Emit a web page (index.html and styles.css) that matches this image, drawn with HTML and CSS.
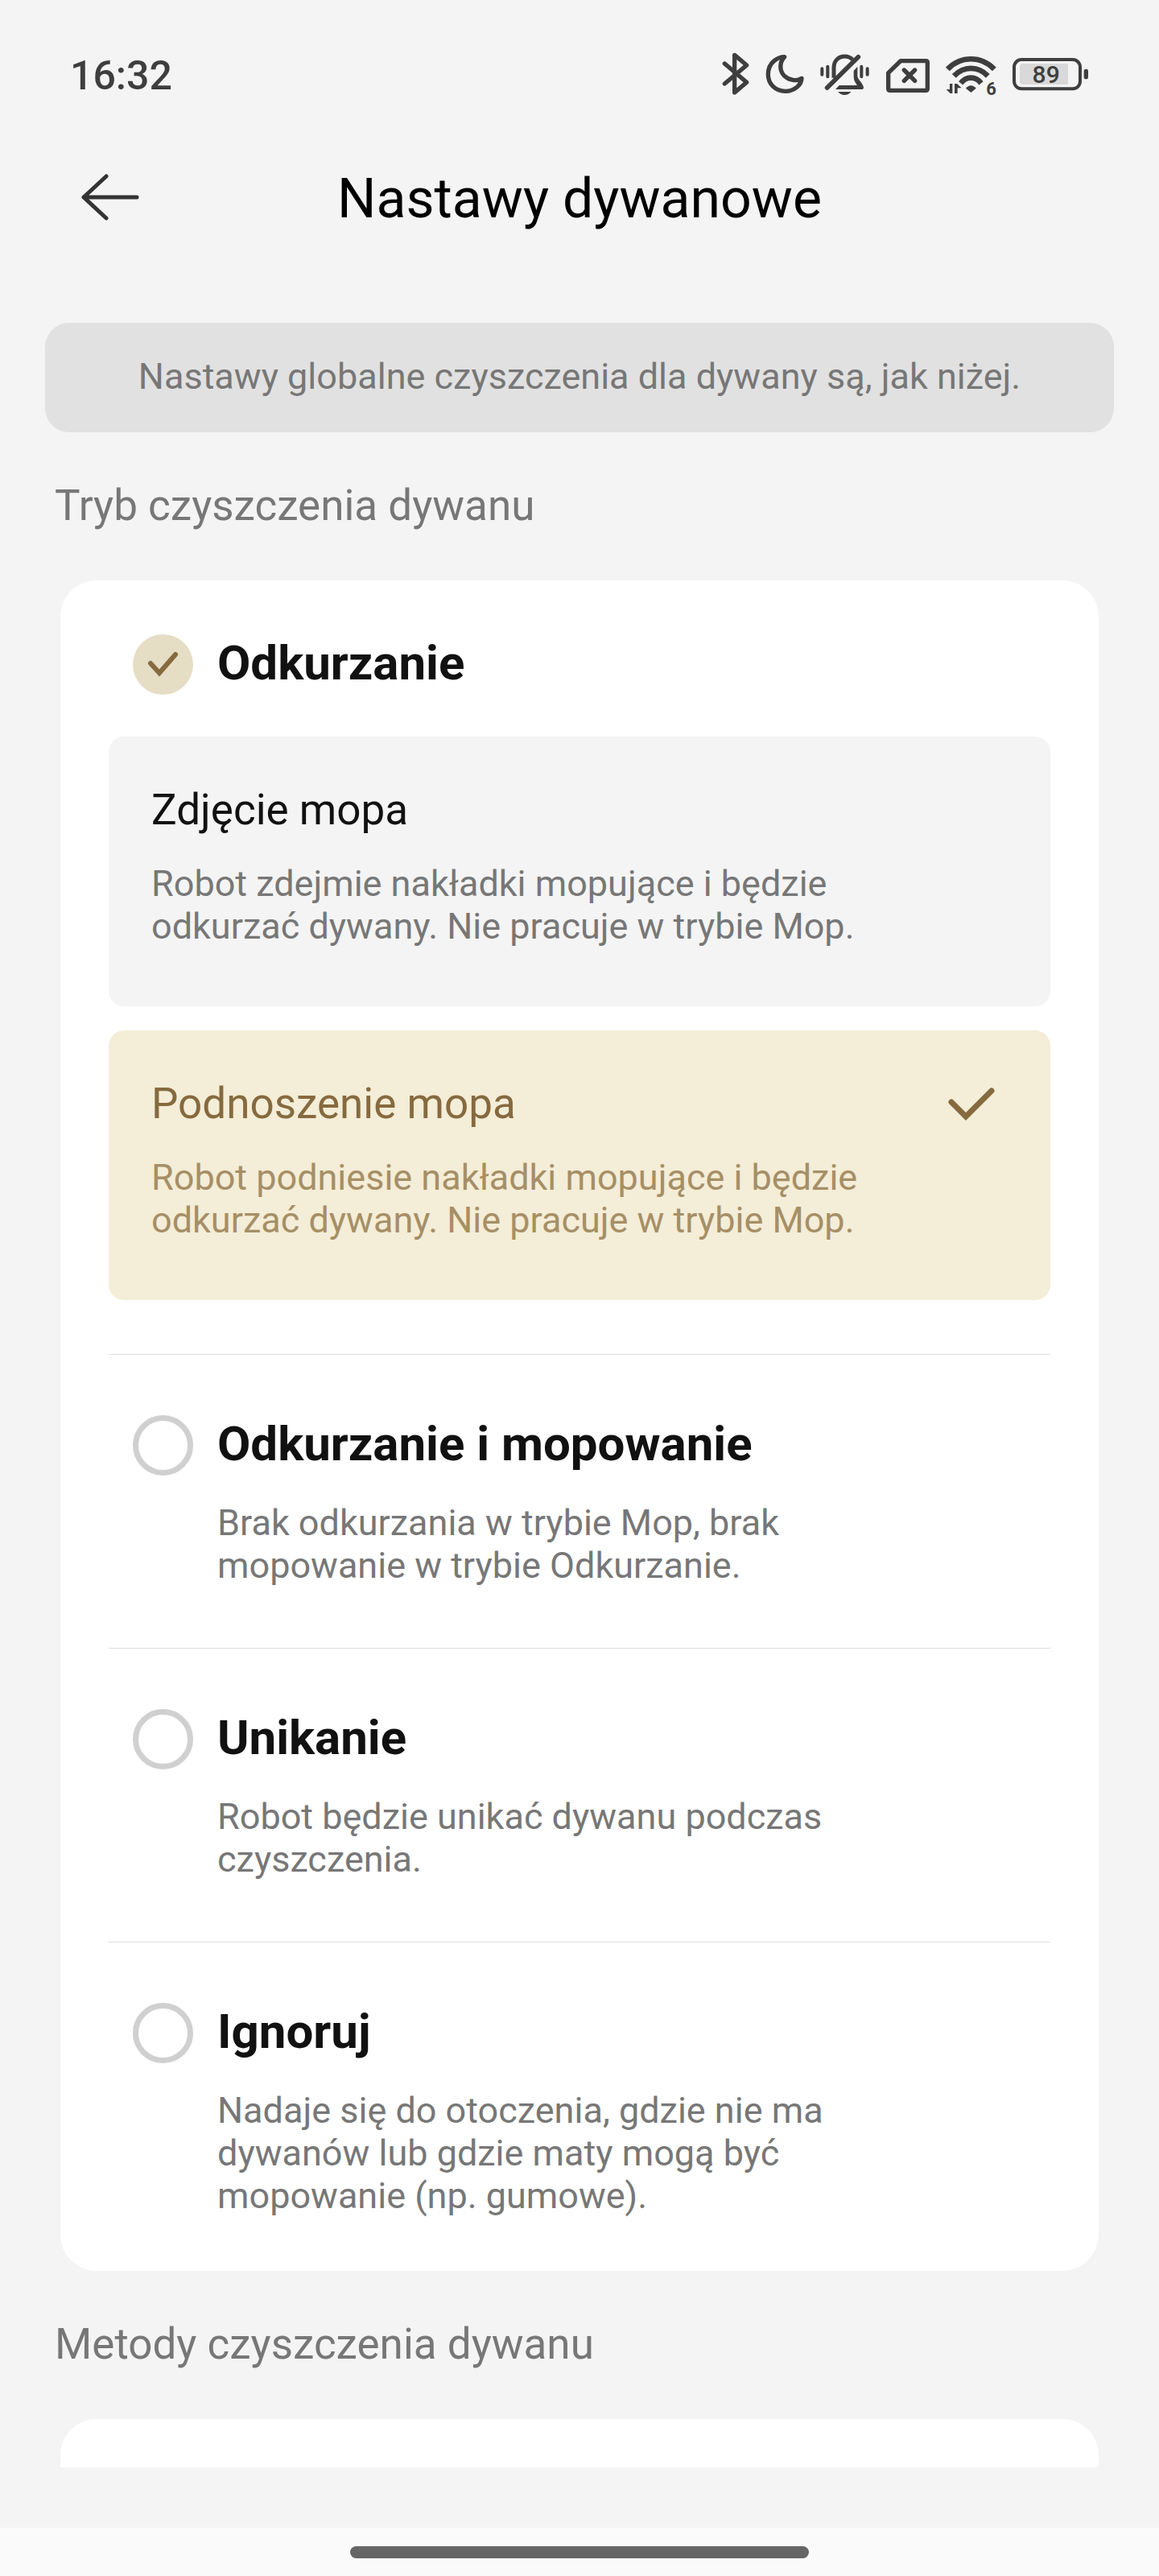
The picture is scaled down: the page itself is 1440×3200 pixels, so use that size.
FILE: index.html
```
<!DOCTYPE html>
<html lang="pl">
<head>
<meta charset="UTF-8">
<meta name="viewport" content="width=device-width, initial-scale=1.0">
<title>Nastawy dywanowe</title>
<link rel="stylesheet" href="styles.css">
</head>
<body>

<div class="status-bar">
    <span class="time">16:32</span>
    <div class="status-icons">
        <!-- bluetooth -->
        <svg width="34" height="65" viewBox="21 0 102 195">
            <path d="M31 57 L113 127 L68 165 V25 L113 63 L31 132" fill="none" stroke="#3e3e3e" stroke-width="16" stroke-linecap="round" stroke-linejoin="round"/>
        </svg>
        <!-- do not disturb -->
        <svg width="48" height="65" viewBox="183 0 144 195">
            <path d="M254 32 C232 32 193 50 193 97 C193 134 221 160 257 160 C290 160 317 137 318 112 C300 124 272 120 254 103 C236 86 233 55 254 32 Z" fill="none" stroke="#3e3e3e" stroke-width="16" stroke-linejoin="round"/>
        </svg>
        <!-- muted bell -->
        <svg width="61" height="65" viewBox="387 0 183 195">
            <g fill="none" stroke="#3e3e3e" stroke-linecap="round">
                <path d="M394 76 V98 M563 76 V98" stroke-width="12"/>
                <path d="M415 68 V106 M541 68 V106" stroke-width="12"/>
                <path d="M413 147 L529 32" stroke-width="17"/>
                <path d="M438 110 V72 C438 44 458 30 478 30 C490 30 501 35 508 42" stroke-width="15" stroke-linecap="butt"/>
            </g>
            <path d="M512 84 L526 68 V104 C528 116 549 134 549 146 C549 150 546 153 541 153 H444 L458 138 H525 C516 124 512 118 512 104 Z" fill="#3e3e3e"/>
            <path d="M454 162 H502 C496 170 488 174 478 174 C468 174 460 170 454 162 Z" fill="#3e3e3e"/>
        </svg>
        <!-- no sim card -->
        <svg width="56" height="65" viewBox="630 0 168 195">
            <path d="M687 47 H781 Q787 47 787 53 V151 Q787 157 781 157 H647 Q641 157 641 151 V92 Z" fill="none" stroke="#3e3e3e" stroke-width="16" stroke-linejoin="round"/>
            <path d="M700 81 L740 121 M740 81 L700 121" stroke="#3e3e3e" stroke-width="16" stroke-linecap="round"/>
        </svg>
        <!-- wifi 6 -->
        <svg width="62" height="65" viewBox="258 0 186 195">
            <g fill="none" stroke="#3e3e3e" stroke-width="20">
                <path d="M262 78 C310 27 388 27 436 78"/>
                <path d="M286 103 C322 65 376 65 412 103"/>
                <path d="M311 130 C332 103 366 103 387 130"/>
            </g>
            <path d="M330 149 C340 135 358 135 368 149 L352 163 Q349 165 346 163 Z" fill="#3e3e3e"/>
            <path d="M280 132 V168 H272 L257 153 H270 V132 Z M288 168 V132 H297 L314 148 H299 V168 Z" fill="#3e3e3e"/>
            <text class="wifi-gen" x="406" y="173">6</text>
        </svg>
        <!-- battery -->
        <svg width="95" height="65" viewBox="504 0 285 195">
            <rect x="510" y="42" width="246" height="109" rx="28" fill="none" stroke="#3e3e3e" stroke-width="12"/>
            <path d="M542 57 H711 V135 H542 Q531 135 531 124 V68 Q531 57 542 57 Z" fill="#d9d9d9"/>
            <rect x="770" y="77" width="16" height="38" rx="8" fill="#3e3e3e"/>
            <text class="battery-level" x="629" y="130">89</text>
        </svg>
    </div>
</div>

<header class="header">
    <button class="back" type="button" aria-label="Wstecz">
        <svg width="74" height="60" viewBox="0 0 74 60">
            <path d="M32 4 L4 30 L32 56 M4 30 H70" fill="none" stroke="#333" stroke-width="5" stroke-linecap="round" stroke-linejoin="round"/>
        </svg>
    </button>
    <h1>Nastawy dywanowe</h1>
</header>

<main class="content">
    <p class="notice">Nastawy globalne czyszczenia dla dywany są, jak niżej.</p>

    <h2>Tryb czyszczenia dywanu</h2>

    <section class="card">
        <div class="option">
            <span class="radio">
                <input type="radio" name="mode" id="vacuum" checked>
                <svg viewBox="0 0 75 75"><path d="M22 36 L33 48 L53 25" fill="none" stroke="#866a3f" stroke-width="6" stroke-linecap="round"/></svg>
            </span>
            <label class="option-title" for="vacuum">Odkurzanie</label>
        </div>

        <div class="choices">
            <label class="choice">
                <input type="radio" name="mop">
                <span class="choice-title">Zdjęcie mopa</span>
                <span class="choice-text">Robot zdejmie nakładki mopujące i będzie odkurzać dywany. Nie pracuje w trybie Mop.</span>
            </label>
            <label class="choice">
                <input type="radio" name="mop" checked>
                <span class="choice-title">Podnoszenie mopa
                    <svg class="tick" width="60" height="45" viewBox="0 0 60 45"><path d="M5 20 L23 38 L55 6" fill="none" stroke="#866a3f" stroke-width="7" stroke-linecap="round"/></svg>
                </span>
                <span class="choice-text">Robot podniesie nakładki mopujące i będzie odkurzać dywany. Nie pracuje w trybie Mop.</span>
            </label>
        </div>

        <div class="option divided">
            <span class="radio"><input type="radio" name="mode" id="both"></span>
            <label class="option-title" for="both">Odkurzanie i mopowanie</label>
            <p class="option-text">Brak odkurzania w trybie Mop, brak mopowanie w trybie Odkurzanie.</p>
        </div>

        <div class="option divided">
            <span class="radio"><input type="radio" name="mode" id="avoid"></span>
            <label class="option-title" for="avoid">Unikanie</label>
            <p class="option-text">Robot będzie unikać dywanu podczas czyszczenia.</p>
        </div>

        <div class="option divided">
            <span class="radio"><input type="radio" name="mode" id="ignore"></span>
            <label class="option-title" for="ignore">Ignoruj</label>
            <p class="option-text">Nadaje się do otoczenia, gdzie nie ma dywanów lub gdzie maty mogą być mopowanie (np. gumowe).</p>
        </div>
    </section>

    <h2>Metody czyszczenia dywanu</h2>

    <section class="card card-cut"></section>
</main>

<footer class="nav-bar">
    <div class="handle"></div>
</footer>

</body>
</html>
```
FILE: styles.css
```
* {
    box-sizing: border-box;
}
body {
    margin: 0;
    min-height: 100vh;
    display: flex;
    flex-direction: column;
    background-color: #f4f4f4;
    font-family: Roboto, sans-serif;
    color: #111111;
}
h1, h2, p {
    margin: 0;
    font-weight: 400;
}

/* system bar */
.status-bar {
    display: flex;
    justify-content: space-between;
    align-items: flex-end;
    padding: 60px 87px 0;
}
.time {
    font-size: 50px;
    line-height: 62px;
    font-weight: 500;
    color: #3e3e3e;
}
.status-icons {
    display: flex;
    gap: 20px;
}
.status-icons svg {
    overflow: visible;
}
.wifi-gen {
    font-size: 66px;
    font-weight: 700;
    fill: #3e3e3e;
}
.battery-level {
    font-size: 90px;
    font-weight: 500;
    text-anchor: middle;
    fill: #3e3e3e;
}

/* title */
.header {
    display: grid;
    grid-template-columns: 80px 1fr 80px;
    align-items: end;
    margin-top: 80px;
    padding: 0 100px;
}
.back {
    display: flex;
    padding: 0 0 12px;
    border: none;
    background: none;
    cursor: pointer;
}
.header h1 {
    padding-top: 2px;
    font-size: 68px;
    line-height: 80px;
    text-align: center;
    color: #000000;
}

.content {
    flex: 1;
    padding: 114px 56px 75px;
}
.notice {
    padding: 40px 30px 43px;
    border-radius: 30px;
    background-color: #e1e1e1;
    font-size: 45px;
    line-height: 53px;
    text-align: center;
    color: #777777;
}
h2 {
    margin: 60px 12px 62px;
    font-size: 53px;
    line-height: 62px;
    color: #777777;
}

/* cards */
.card {
    margin: 0 19px;
    padding: 67px 60px;
    border-radius: 45px;
    background-color: #ffffff;
}
.card-cut {
    height: 60px;
    padding: 0;
    border-radius: 45px 45px 0 0;
}
.option {
    display: grid;
    grid-template-columns: 75px 1fr;
    column-gap: 30px;
    align-items: start;
    padding: 0 180px 0 30px;
}
.divided {
    padding-top: 75px;
    padding-bottom: 76px;
    border-top: 1px solid #dedede;
}
.divided:last-child {
    padding-bottom: 0;
}
.option-title {
    font-size: 60px;
    line-height: 72px;
    font-weight: 700;
}
.option-text {
    grid-column: 2;
    margin-top: 32px;
    font-size: 45px;
    line-height: 53px;
    color: #777777;
}
.radio {
    display: grid;
    width: 75px;
    height: 75px;
}
.radio input, .radio svg {
    grid-area: 1 / 1;
}
.radio input {
    appearance: none;
    width: 75px;
    height: 75px;
    margin: 0;
    border: 7px solid #d0d0d0;
    border-radius: 50%;
}
.radio input:checked {
    border: none;
    background-color: #e5ddc4;
}
.radio svg {
    pointer-events: none;
}
.radio input:not(:checked) + svg {
    display: none;
}

/* mop choices */
.choices {
    display: flex;
    flex-direction: column;
    gap: 30px;
    margin: 52px 0 67px;
}
.choice {
    display: block;
    padding: 60px 68px 73px 53px;
    border-radius: 19px;
    background-color: #f4f4f4;
}
.choice input {
    position: absolute;
    opacity: 0;
}
.choice-title {
    display: flex;
    justify-content: space-between;
    align-items: center;
    font-size: 53px;
    line-height: 62px;
}
.choice-text {
    display: block;
    margin: 34px 112px 0 0;
    font-size: 45px;
    line-height: 53px;
    color: #777777;
}
.choice:has(:checked) {
    background-color: #f4edd7;
}
.choice:has(:checked) .choice-title {
    color: #866a3f;
}
.choice:has(:checked) .choice-text {
    color: #a68f66;
}

/* gesture bar */
.nav-bar {
    display: flex;
    justify-content: center;
    padding: 23px 0 22px;
    background-color: #fafafa;
}
.handle {
    width: 570px;
    max-width: 60%;
    height: 15px;
    border-radius: 8px;
    background-color: #666666;
}
```
